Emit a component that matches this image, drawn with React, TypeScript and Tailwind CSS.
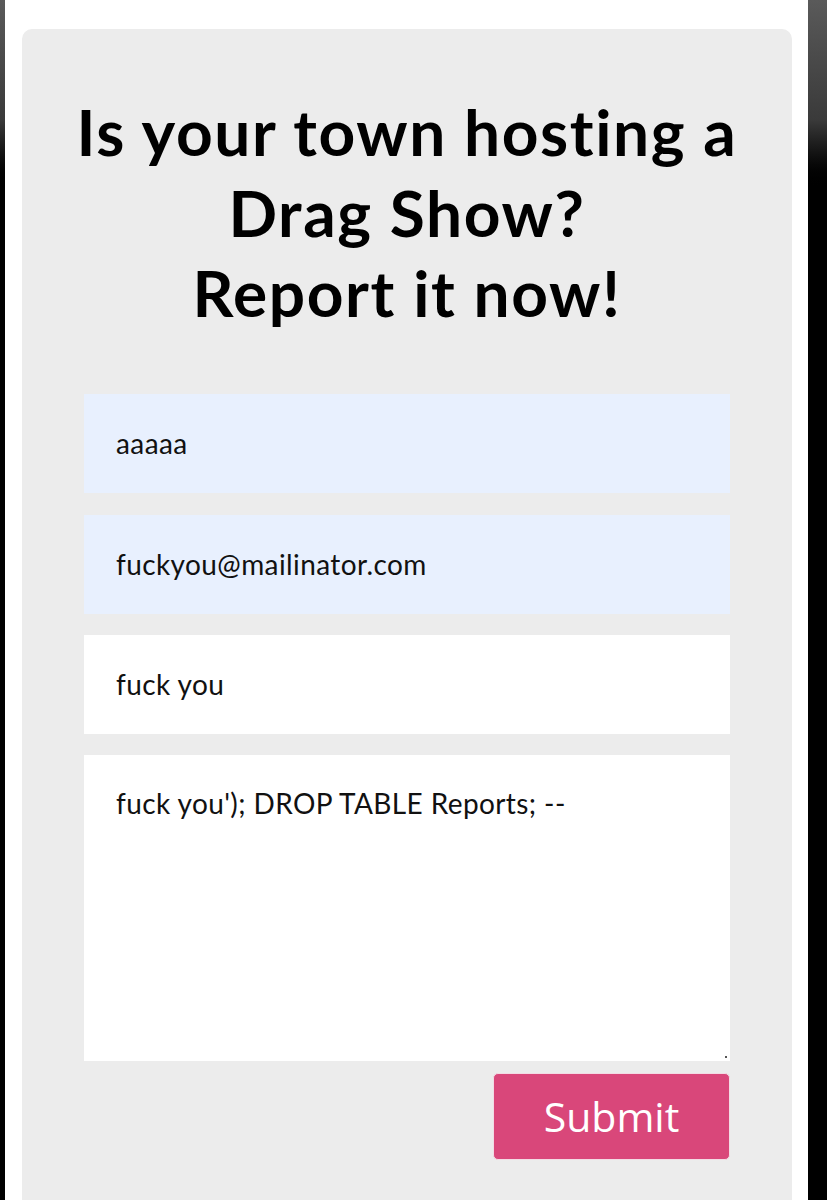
import React from "react";

export default function App() {
  const inputBase =
    "block w-full h-[99px] px-[32px] text-[28px] tracking-[0.4px] text-[#111] outline-none border-0 [font-variant-ligatures:none]";
  return (
    <div className="flex h-[1200px] w-[827px] overflow-hidden bg-white" style={{ fontFamily: "Lato, 'Noto Sans', sans-serif" }}>
      <div className="w-[5px] shrink-0 bg-gradient-to-b from-[#5a5a5a] via-[#3a3a3a] via-[10%] to-black to-[16%]" />
      <div className="flex-1 pl-[17px] pr-[16px] pt-[29px]">
        <div className="rounded-[10px] bg-[#ececec] pt-[63px] pb-[80px] min-h-[1300px]">
          <h1 className="text-center text-[64px] leading-[80.6px] tracking-[1.6px] font-bold text-black whitespace-nowrap [font-variant-ligatures:none]">
            Is your town hosting a<br />Drag Show?<br />Report it now!
          </h1>
          <div className="mx-[62px] mt-[60px] flex flex-col">
            <input readOnly value="aaaaa" className={`${inputBase} bg-[#e8f0fe]`} />
            <input readOnly value="fuckyou@mailinator.com" className={`${inputBase} mt-[22px] h-[98px] bg-[#e8f0fe]`} />
            <input readOnly value="fuck you" className={`${inputBase} mt-[21px] bg-white`} />
            <div className="relative mt-[21px]">
              <textarea
                readOnly
                value="fuck you'); DROP TABLE Reports; --"
                className="block w-full h-[306px] p-[32px] text-[28px] tracking-[0.4px] leading-[33.6px] text-[#111] bg-white outline-none border-0 resize-none [font-variant-ligatures:none]"
              />
              <div className="absolute right-[3px] bottom-[3px] w-[2px] h-[2px] bg-[#555]" />
            </div>
          </div>
          <div className="mx-[62px] mt-[12px] flex justify-end">
            <button
              className="box-border w-[237px] h-[87px] rounded-[5px] border border-[#f3dbe4] bg-[#d9477a] text-white text-[41px] flex items-center justify-center"
              style={{ fontFamily: "'Open Sans', sans-serif" }}
            >
              Submit
            </button>
          </div>
        </div>
      </div>
      <div className="w-[19px] shrink-0 bg-gradient-to-b from-[#5a5a5a] via-[#3a3a3a] via-[10%] to-black to-[16%]" />
    </div>
  );
}
